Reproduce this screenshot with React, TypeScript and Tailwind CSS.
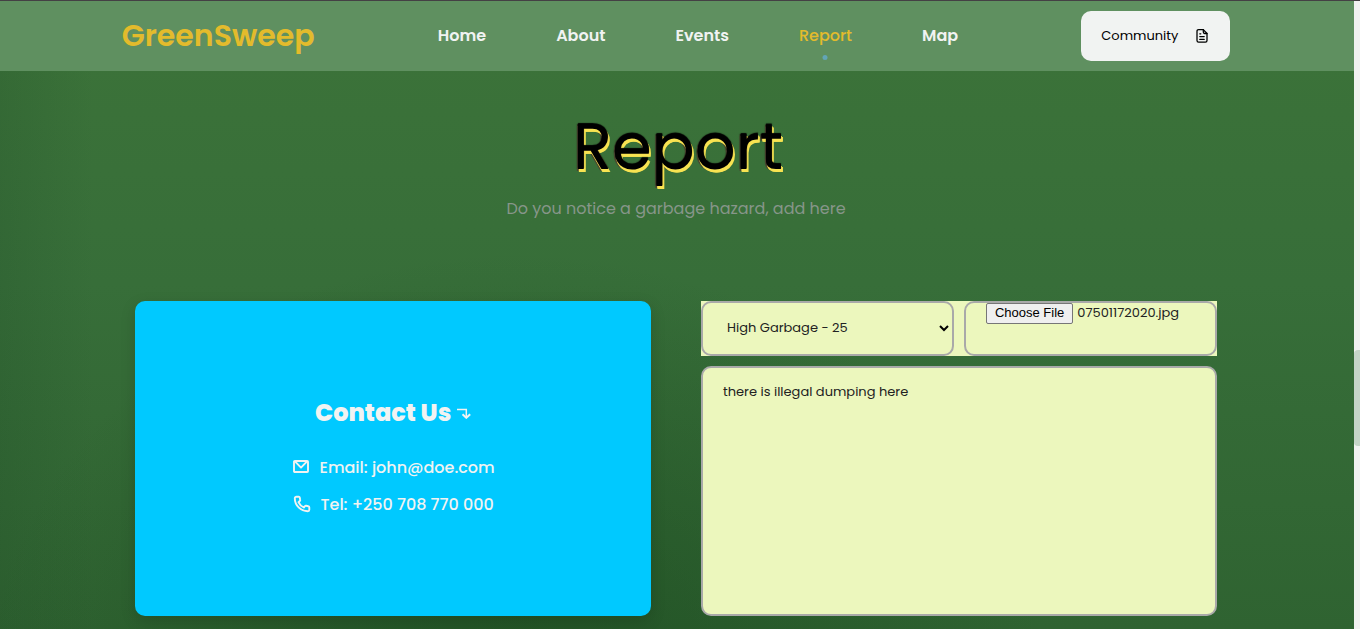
import { useEffect, useRef } from "react";

const links = ["Home", "About", "Events", "Report", "Map"];

function FileIcon() {
  return (
    <svg width="16" height="16" viewBox="0 0 16 16" fill="none" stroke="currentColor" strokeWidth="1.3" strokeLinejoin="round" strokeLinecap="round" aria-hidden="true">
      <path d="M9.300 1.600H4.600C3.600 1.600 3 2.300 3 3.200v9.400c0 .9.6 1.600 1.600 1.600h6.800c1 0 1.600-.7 1.600-1.600V5.500z" />
      <path d="M9.300 1.600v2.500c0 .8.5 1.400 1.300 1.400H13M5.800 5.800h1M5.800 8.600h4.400M5.800 11.400h4.400" />
    </svg>
  );
}

function MailIcon() {
  return (
    <svg width="18" height="18" viewBox="0 0 18 18" fill="none" stroke="currentColor" strokeWidth="1.9" strokeLinejoin="round" aria-hidden="true">
      <rect x="2" y="3" width="14" height="11" rx="0.8" />
      <path d="M3.200 3.600l5.800 6 5.800-6" />
    </svg>
  );
}

function PhoneIcon() {
  return (
    <svg width="18" height="18" viewBox="0 0 18 18" fill="none" stroke="currentColor" strokeWidth="1.9" strokeLinejoin="round" aria-hidden="true">
      <path d="M3.400 1.700h2.300c.6 0 1 .3 1.100.9l.4 2.300c.1.500 0 .8-.4 1.100L5.500 7.200c1 2.300 2.900 4.200 5.300 5.300l1.200-1.300c.3-.4.600-.5 1.100-.4l2.300.5c.600.1.9.5.9 1.100v2.300c0 .9-.6 1.500-1.500 1.500C7.700 16.200 1.800 10.300 1.800 3.200c0-.9.700-1.500 1.600-1.500z" />
    </svg>
  );
}

function TurnIcon() {
  return (
    <svg width="14" height="12" viewBox="0 0 14 12" fill="none" stroke="currentColor" strokeWidth="1.5" aria-hidden="true">
      <path d="M0 2.500h9.300v8" />
      <path d="M5.500 7.300l3.800 3.500 3.900-3.500" strokeWidth="2" />
    </svg>
  );
}

export default function App() {
  const fileRef = useRef<HTMLInputElement>(null);

  useEffect(() => {
    if (!fileRef.current) return;
    const transfer = new DataTransfer();
    transfer.items.add(new File([""], "07501172020.jpg", { type: "image/jpeg" }));
    fileRef.current.files = transfer.files;
  }, []);

  return (
    <div className="flex min-h-screen font-[Poppins,Inter,sans-serif] border-t border-[#444044]">
      <div className="flex-1 bg-[linear-gradient(to_right,rgba(20,60,30,0.15),transparent_7%),radial-gradient(ellipse_at_38%_110%,rgba(20,65,25,0.5),transparent_45%),linear-gradient(to_bottom,#3c7339,#376e39_45%,#2f6331)] pr-0.5">
        <header className="-mr-0.5 bg-[#5f9060] pr-0.5">
          <div className="mx-auto flex h-[70px] w-[82%] items-center justify-between">
            <a href="#home" className="text-3xl font-semibold leading-10 text-[#e3bb2c]">GreenSweep</a>
            <nav className="flex gap-[70px]">
              {links.map((l) => (
                <a
                  key={l}
                  href={"#" + l.toLowerCase()}
                  className={l === "Report" ? "relative text-base font-medium text-[#e3bb2c]" : "relative text-base font-semibold text-[#f1f3f2]"}
                >
                  {l}
                  {l === "Report" && <span className="absolute -bottom-3 left-1/2 size-[5px] -translate-x-1/2 rounded-full bg-[#62a5b5]" />}
                </a>
              ))}
            </nav>
            <button className="flex h-[50px] items-center gap-4 rounded-[10px] bg-[#f1f3f2] px-5 text-[13px] text-black">
              Community
              <FileIcon />
            </button>
          </div>
        </header>

        <main className="mx-auto w-4/5 max-w-[1082px] pb-3">
          <div className="pt-[34px] text-center">
            <h1 className="pl-1 text-[64px] leading-[84px] text-black [text-shadow:0_-1px_1px_#000,1px_2px_0_#f8e352,1px_3px_0_#f8e352,2px_3px_0_#f8e352,-1px_2px_0_#4b4530,-1px_0_1px_#332f20]">Report</h1>
            <p className="mt-2 text-base leading-6 text-[#87968a]">Do you notice a garbage hazard, add here</p>
          </div>

          <div className="mt-20 grid grid-cols-2 gap-[50px]">
            <section className="flex flex-col items-center justify-center rounded-[10px] bg-[#00c9ff] text-[#f1f3f2] shadow-[0_5px_15px_rgba(0,0,0,0.15)]">
              <h2 className="flex items-center gap-[6px] text-2xl font-extrabold leading-9">
                Contact Us
                <TurnIcon />
              </h2>
              <p className="mt-[18px] flex items-center gap-[10px] text-base font-medium leading-[37px]">
                <MailIcon />
                Email: john@doe.com
              </p>
              <p className="flex items-center gap-[10px] text-base font-medium leading-[37px]">
                <PhoneIcon />
                Tel: +250 708 770 000
              </p>
            </section>

            <form className="text-sm text-[#222]">
              <div className="grid grid-cols-2 gap-[10px] bg-[#ecf7bd]">
                <div className="relative">
                  <select aria-label="Garbage level" className="h-[55px] w-full appearance-none rounded-[10px] border-2 border-[#a9a9a9] bg-[#ecf7bd] px-6 text-[13px]">
                    <option>High Garbage - 25</option>
                  </select>
                  <svg className="pointer-events-none absolute right-[5px] top-6" width="10" height="8" viewBox="0 0 10 8" fill="none" stroke="#000" strokeWidth="2" aria-hidden="true">
                    <path d="M1 1l4 4 4-4" />
                  </svg>
                </div>
                <input
                  ref={fileRef}
                  type="file"
                  aria-label="Photo"
                  className="h-[55px] w-full min-w-0 rounded-[10px] border-2 border-[#a9a9a9] px-5 text-[13px] file:mr-1 file:h-[21px] file:rounded-[2px] file:border file:border-solid file:border-[#767676] file:bg-[#efefef] file:px-2 file:font-[Liberation_Sans,sans-serif] file:text-[13px] file:text-black"
                />
              </div>
              <textarea
                aria-label="Description"
                defaultValue="there is illegal dumping here"
                className="mt-[10px] block h-[250px] w-full resize-none rounded-[10px] border-2 border-[#a9a9a9] bg-[#ecf7bd] px-5 py-[14px] text-[13px] leading-5"
              />
            </form>
          </div>
        </main>
      </div>
      <div className="flex w-[6px] flex-col bg-[#f1f1f1]" aria-hidden="true">
        <div className="basis-[55.5%]" />
        <div className="h-24 rounded-l bg-[#c5d4c8]" />
      </div>
    </div>
  );
}
